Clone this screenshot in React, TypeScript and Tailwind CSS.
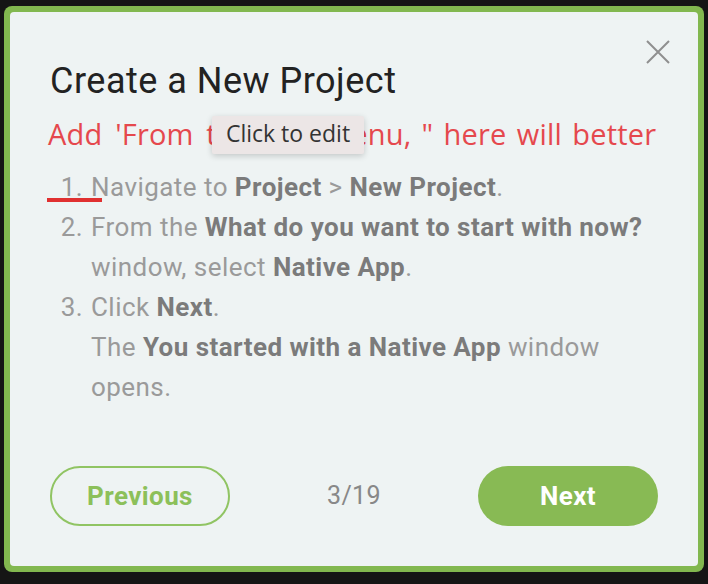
function CloseIcon() {
  return (
    <svg width="26" height="26" viewBox="0 0 26 26" fill="none">
      <path d="M2 2L24 24M24 2L2 24" stroke="#8f8f8f" strokeWidth="2" />
    </svg>
  );
}

function App() {
  const bold = 'font-bold text-[#7b7b7b]';

  return (
    <div className="w-[708px] h-[584px] bg-[#151515] pt-[6px] pl-[4px]" style={{ fontFamily: 'Roboto, "Liberation Sans", sans-serif' }}>
      <div className="w-[700px] h-[566px] bg-[#82b84f] rounded-[8px] p-[6px]">
        <div className="relative h-full bg-[#eef3f3] rounded-[4px] pl-[40px] pr-[40px] pt-[48px] flex flex-col">
          <button className="absolute top-[27px] right-[27px]">
            <CloseIcon />
          </button>

          <h1 className="text-[36px] leading-[42px] text-[#222] tracking-[0.5px]">Create a New Project</h1>

          <div className="relative mt-[13px]">
            <p
              className="text-[29px] leading-[38px] text-[#e5484d] -ml-[2px] tracking-[0.2px] [word-spacing:2.5px]"
              style={{ fontFamily: '"Open Sans", sans-serif' }}
            >
              <span className="[word-spacing:5px]">Add 'From </span>the Edit menu, " here will better
            </p>
            <div
              className="absolute left-[162px] top-[1px] w-[152px] h-[38px] pb-[3px] bg-[#ece6e6] rounded-[2px] shadow-[0_2px_6px_rgba(0,0,0,0.18)] flex items-center justify-center text-[23px] text-[#333]"
              style={{ fontFamily: '"Open Sans", sans-serif' }}
            >
              Click to edit
            </div>
          </div>

          <ol className="mt-[14px] text-[26px] leading-[40px] text-[#9a9a9a] tracking-[0.45px]">
            <li className="flex">
              <span className="relative w-[41px] text-right pr-[8px] shrink-0">
                1.
                <span className="absolute left-[-3px] bottom-[5px] w-[55px] h-[4px] bg-[#e03030]" />
              </span>
              <span>
                Navigate to <b className={bold}>Project</b> &gt; <b className={bold}>New Project</b>.
              </span>
            </li>
            <li className="flex">
              <span className="w-[41px] text-right pr-[8px] shrink-0">2.</span>
              <span>
                From the <b className={bold}>What do you want to start with now?</b> window, select{' '}
                <b className={bold}>Native App</b>.
              </span>
            </li>
            <li className="flex">
              <span className="w-[41px] text-right pr-[8px] shrink-0">3.</span>
              <span>
                Click <b className={bold}>Next</b>.
                <br />
                The <b className={bold}>You started with a Native App</b> window opens.
              </span>
            </li>
          </ol>

          <div className="mt-auto mb-[40px] flex items-center justify-between">
            <button className="w-[180px] h-[60px] rounded-full border-2 border-[#90c463] text-[#8cc05a] text-[26px] font-bold tracking-[0.4px]">
              Previous
            </button>
            <span className="text-[25px] text-[#888] tracking-[0.4px]">3/19</span>
            <button className="w-[180px] h-[60px] rounded-full bg-[#88ba54] text-white text-[26px] font-bold tracking-[0.4px]">
              Next
            </button>
          </div>
        </div>
      </div>
    </div>
  );
}

export default App;
